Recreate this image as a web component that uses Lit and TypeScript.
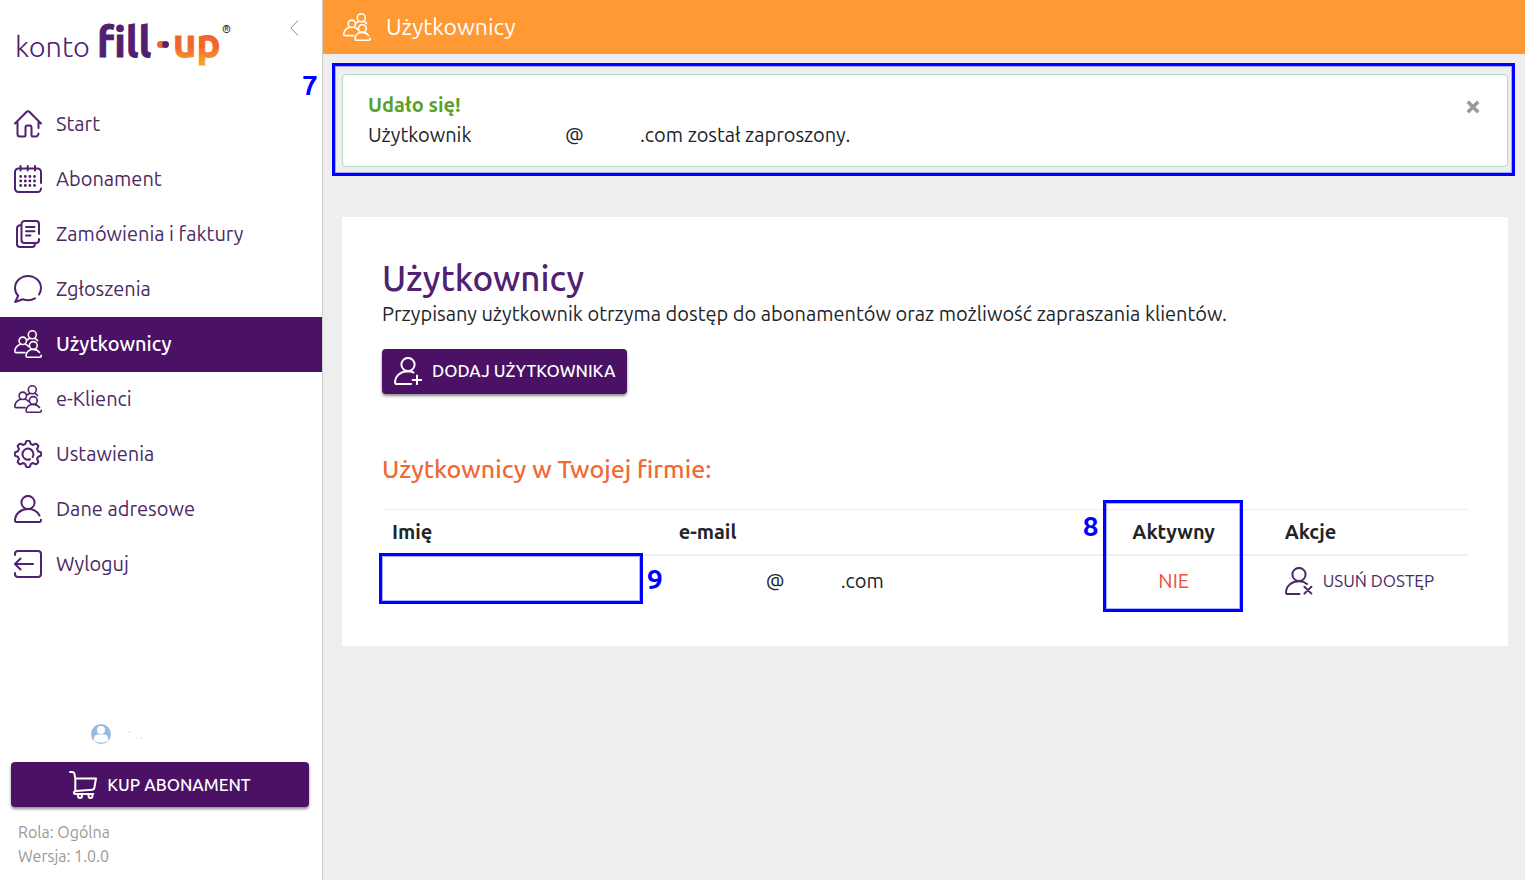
import { LitElement, html, css, svg } from "lit";
import { customElement, property, state } from "lit/decorators.js";
import { classMap } from "lit/directives/class-map.js";

/** Outline of a cog with rounded teeth, centred in a 28 unit box. */
function cog(teeth: number, inner: number, outer: number): string {
  const points: string[] = [];
  const steps = teeth * 12;
  for (let i = 0; i < steps; i++) {
    const angle = (i / steps) * Math.PI * 2;
    const wave = Math.tanh(2.6 * Math.cos(teeth * angle));
    const radius = (inner + outer) / 2 + (wave * (outer - inner)) / 2;
    points.push(
      `${(14 + radius * Math.sin(angle)).toFixed(2)} ${(14 - radius * Math.cos(angle)).toFixed(2)}`
    );
  }
  return `M${points.join("L")}Z`;
}

const ICONS: Record<string, unknown> = {
  home: svg`<path d="M1 13.500 12.700 1.800a1.800 1.800 0 0 1 2.600 0L27 13.500M3.500 12v12a2.500 2.500 0 0 0 2.500 2.500h4.500c.6 0 1-.4 1-1V17.500a2 2 0 0 1 2-2h2a2 2 0 0 1 2 2v8c0 .6.4 1 1 1H21.500a3 3 0 0 0 3-3M24.500 12v6"/>`,
  calendar: svg`<path d="M27 18V7a3.500 3.500 0 0 0-3.500-3.500h-19A3.500 3.500 0 0 0 1 7v16.500A3.500 3.500 0 0 0 4.500 27h19a3.500 3.500 0 0 0 3.500-3.500M6.500 1v4.500M13.700 1v4.500M21 1v4.500"/>
    <path stroke-width="2.900" d="M6.700 11.500h0M11.300 11.500h0M15.900 11.500h0M20.500 11.500h0M6.700 16h0M11.300 16h0M15.900 16h0M20.500 16h0M6.700 20.500h0M11.300 20.500h0M15.900 20.500h0M20.500 20.500h0"/>`,
  documents: svg`<path d="M25 14V4a3 3 0 0 0-3-3H10.500a3 3 0 0 0-3 3v16a3 3 0 0 0 3 3H22a3 3 0 0 0 3-3v-1M7.500 5C4.500 5 3 6.500 3 8.500V24a3 3 0 0 0 3 3h12c2 0 3-1.500 3-3.500M12 7h8.500M12 11.300h8.500M12 15.600h4.500"/>`,
  chat: svg`<path d="M25 19.500A12.300 12.300 0 0 0 27 13C27 6.400 21.200 1 14 1S1 6.400 1 13c0 3.200 1.100 5.700 3.200 7.800L1.200 27l7.600-2.800c4 1.400 8.700 1.100 12.200-.9"/>`,
  users: svg`<g stroke-width="1.600"><circle cx="18.300" cy="4.800" r="4"/><path d="M21 8.500c1.200.6 2 1.300 2.600 2.200M15.500 8.500l-2.200 1.200"/>
    <circle cx="8.800" cy="10.800" r="3.700"/><path d="M6.500 14.200C3 15.500 1 18 .8 21.200c0 .9.500 1.400 1.400 1.400H11M11.500 14.200c1.300.5 2.200 1.300 3 2.300"/>
    <circle cx="19.300" cy="15.500" r="3.900"/><path d="M25.500 22.500c-1.400-1.900-3.400-3.100-6.200-3.100-4.200 0-7 2.600-7.300 6.300 0 1 .5 1.500 1.400 1.500h12.400c1 0 1.500-.6 1.400-1.900"/></g>`,
  gear: svg`<path d="${cog(8, 10.3, 13.2)}"/><path d="M18.600 17A5.500 5.500 0 1 0 16 19.200"/>`,
  user: svg`<circle cx="14" cy="7.500" r="6.600"/><path d="M25.500 20.500c-2.200-4-6.300-6.400-11.500-6.400C6.800 14.100 1.500 18.500 1 25c-.1 1.300.6 2 1.800 2h22.400c1.200 0 1.900-.7 1.800-2.300"/>`,
  logout: svg`<path d="M1 5V4a3 3 0 0 1 3-3h20a3 3 0 0 1 3 3v20a3 3 0 0 1-3 3H4a3 3 0 0 1-3-3v-1M19 14H1.500M6.500 8.500 1 14l5.500 5.500"/>`,
  userPlus: svg`<circle cx="14" cy="7.500" r="6.600"/><path d="M19.500 15.500a15 15 0 0 0-5.500-1.200C6.800 14.300 1.500 18.500 1 25c-.1 1.300.6 2 1.800 2H17M23 18.500v8.800M18.600 22.900h8.800"/>`,
  userRemove: svg`<circle cx="14" cy="7.500" r="6.600"/><path d="M22 17c-2.200-1.800-4.900-2.700-8-2.700C6.800 14.300 1.500 18.500 1 25c-.1 1.300.6 2 1.800 2H14.500M19.400 19.800l7 6.800M26.400 19.800l-7 6.800"/>`,
  cart: svg`<path d="M1 1h2c1.400 0 2.200.7 2.500 2l.8 4.500H27L25.300 17c-.2 1-.9 1.600-1.900 1.700L6.800 20c-2.600.4-2.400 3 0 3h17.500M6.300 7.500V19.500"/><circle cx="11" cy="25" r="2"/><circle cx="21.500" cy="25" r="2"/>`,
};

@customElement("app-icon")
export class AppIcon extends LitElement {
  static styles = css`
    :host {
      display: block;
      flex: none;
      width: 28px;
      height: 28px;
    }
    .glyph {
      display: block;
      width: 100%;
      height: 100%;
      fill: none;
      stroke: currentColor;
      stroke-width: 2;
      stroke-linecap: round;
      stroke-linejoin: round;
    }
  `;

  @property() name = "home";

  render() {
    return html`<svg class="glyph" viewBox="0 0 28 28" aria-hidden="true">${ICONS[this.name]}</svg>`;
  }
}

interface NavItem {
  id: string;
  icon: string;
  label: string;
}

const NAV: NavItem[] = [
  { id: "start", icon: "home", label: "Start" },
  { id: "abonament", icon: "calendar", label: "Abonament" },
  { id: "faktury", icon: "documents", label: "Zamówienia i faktury" },
  { id: "zgloszenia", icon: "chat", label: "Zgłoszenia" },
  { id: "uzytkownicy", icon: "users", label: "Użytkownicy" },
  { id: "e-klienci", icon: "users", label: "e-Klienci" },
  { id: "ustawienia", icon: "gear", label: "Ustawienia" },
  { id: "dane", icon: "user", label: "Dane adresowe" },
  { id: "wyloguj", icon: "logout", label: "Wyloguj" },
];

@customElement("app-root")
export class AppRoot extends LitElement {
  static styles = css`
    :host {
      display: flex;
      min-height: 100vh;
      background: #eeeeee;
      color: #212529;
      font-family: Ubuntu, "Noto Sans", "Open Sans", sans-serif;
      font-size: 20px;
      line-height: 30px;
    }
    * {
      box-sizing: border-box;
    }
    button {
      font: inherit;
      cursor: pointer;
    }

    .sidebar {
      display: flex;
      flex: none;
      flex-direction: column;
      width: 323px;
      border-right: 1px solid #cccccc;
      background: #ffffff;
    }
    .brand {
      display: flex;
      justify-content: space-between;
      align-items: flex-start;
      height: 97px;
      padding: 16px 20px 0 14px;
    }
    .logo {
      display: block;
      width: 220px;
      height: 56px;
    }
    .logo-light {
      font-size: 29px;
      font-weight: 300;
      fill: #4f2170;
    }
    .logo-bold {
      font-size: 42px;
      font-weight: 700;
      fill: #4f2170;
      stroke: #4f2170;
      stroke-width: 1;
    }
    .logo-up {
      font-size: 40px;
      font-weight: 700;
      fill: url(#warm);
      stroke: url(#warm);
      stroke-width: 1;
    }
    .logo-mark {
      font-size: 11px;
      font-weight: 500;
      fill: #333333;
    }
    .collapse {
      width: 16px;
      height: 24px;
      padding: 2px 3px;
      border: 0;
      background: none;
      color: #888888;
    }
    .chevron {
      display: block;
      width: 11px;
      height: 18px;
      fill: none;
      stroke: currentColor;
    }
    .nav-link {
      display: flex;
      align-items: center;
      gap: 14px;
      height: 55px;
      padding: 0 14px 1px;
      color: #4b2a63;
      text-decoration: none;
    }
    .nav-link.active {
      background: #4a1164;
      color: #ffffff;
      font-weight: 500;
    }
    .nav-icon {
      color: #4f2170;
    }
    .active .nav-icon {
      color: #ffffff;
    }
    .side-foot {
      margin-top: auto;
      padding: 0 13px 12px 11px;
    }
    .account {
      display: flex;
      align-items: center;
      gap: 17px;
      padding: 0 80px 18px;
    }
    .avatar {
      display: block;
      width: 20px;
      height: 20px;
    }
    .specks {
      display: block;
      width: 16px;
      height: 10px;
    }
    .meta {
      padding: 13px 7px 0;
      color: #999999;
      font-size: 16px;
      line-height: 24px;
    }

    .solid {
      display: flex;
      align-items: center;
      justify-content: center;
      gap: 10px;
      height: 45px;
      padding: 0 12px 1px;
      border: 0;
      border-radius: 4px;
      background: #4a1164;
      box-shadow: 0 2px 3px rgba(0, 0, 0, 0.45);
      color: #ffffff;
      font-size: 17px;
      font-weight: 500;
      white-space: nowrap;
    }
    .wide {
      width: 100%;
      padding-bottom: 0;
    }

    .main {
      flex: 1;
      min-width: 0;
    }
    .topbar {
      display: flex;
      align-items: center;
      gap: 15px;
      height: 54px;
      padding: 0 20px;
      background: #ff9933;
      color: #ffffff;
      font-size: 23px;
    }
    .content {
      padding: 20px 17px 20px 19px;
    }

    .alert {
      position: relative;
      display: flex;
      justify-content: space-between;
      align-items: flex-start;
      margin-bottom: 50px;
      padding: 15px 25px 16px;
      border: 1px solid #b1dbbb;
      border-radius: 4px;
      background: #ffffff;
    }
    .alert-title {
      color: #5aa02c;
      font-weight: 700;
    }
    .alert-text {
      display: flex;
    }
    .invitee {
      width: 197px;
    }
    .at {
      width: 75px;
    }
    .close {
      width: 18px;
      height: 20px;
      margin-top: 7px;
      padding: 3px 2px;
      border: 0;
      background: none;
      color: #999999;
    }
    .cross {
      display: block;
      width: 14px;
      height: 14px;
      fill: none;
      stroke: currentColor;
      stroke-width: 3;
    }

    .card {
      padding: 40px;
      background: #ffffff;
    }
    .title {
      margin: 0;
      color: #4f2170;
      font-size: 35px;
      font-weight: 550;
      line-height: 42px;
    }
    .lead {
      margin: 0 0 20px;
    }
    .subtitle {
      margin: 60px 0 25px;
      color: #f06a35;
      font-size: 25px;
      font-weight: 550;
      line-height: 30px;
    }
    .people {
      width: 100%;
      border-collapse: separate;
      border-spacing: 0;
      table-layout: fixed;
    }
    .people th,
    .people td {
      position: relative;
      padding: 0 10px;
      text-align: left;
    }
    .people th {
      height: 47px;
      border-top: 1px solid #eeeeee;
      border-bottom: 2px solid #eeeeee;
      font-weight: 700;
    }
    .people td {
      height: 50px;
    }
    .col-name {
      width: 26.4%;
    }
    .col-mail {
      width: 37.2%;
    }
    .col-active {
      width: 18.6%;
    }
    .people .centered {
      text-align: center;
    }
    .people .no {
      color: #f0503c;
    }
    .mail {
      display: flex;
      padding-left: 87px;
    }
    .revoke {
      display: flex;
      align-items: center;
      gap: 10px;
      padding: 0;
      border: 0;
      background: none;
      color: #4b2a63;
      font-size: 17px;
      white-space: nowrap;
    }

    .frame {
      position: absolute;
      border: 3px solid #0000ff;
      box-shadow: inset 0 0 0 1px rgba(0, 0, 255, 0.3);
      pointer-events: none;
    }
    .number {
      position: absolute;
      color: #0000ff;
      font-size: 28px;
      font-weight: 700;
      line-height: 30px;
    }
    .frame-alert {
      inset: -12px -8px -10px -11px;
    }
    .number-alert {
      top: -5px;
      left: -41px;
    }
    .frame-active {
      top: -10px;
      right: 32px;
      left: 30px;
      height: 112px;
    }
    .number-active {
      top: 1px;
      left: 10px;
    }
    .frame-name {
      inset: -3px 26px 2px -3px;
    }
    .number-name {
      top: 8px;
      right: 6px;
    }
  `;

  @state() private current = "uzytkownicy";
  @state() private alertOpen = true;

  private select(event: Event, id: string) {
    event.preventDefault();
    this.current = id;
  }

  private renderLogo() {
    return html`
      <svg class="logo" viewBox="14 16 220 56" role="img" aria-label="konto fill-up">
        <defs>
          <linearGradient id="warm" x1="0" y1="0" x2="0" y2="1">
            <stop offset="0.600" stop-color="#f1662f" />
            <stop offset="0.950" stop-color="#fba030" />
          </linearGradient>
        </defs>
        <text class="logo-light" x="15" y="57">konto</text>
        <text class="logo-bold" x="97" y="57">fill</text>
        <rect x="157" y="41" width="12" height="7" rx="3.500" fill="#f1662f" />
        <circle cx="165.500" cy="44.500" r="3.300" fill="#4f2170" />
        <text class="logo-up" x="173" y="57">up</text>
        <text class="logo-mark" x="222" y="33">®</text>
      </svg>
    `;
  }

  private renderSidebar() {
    return html`
      <aside class="sidebar">
        <div class="brand">
          ${this.renderLogo()}
          <button class="collapse" aria-label="Zwiń menu">
            <svg class="chevron" viewBox="0 0 11 18"><path d="M9 1.500 2 9l7 7.500" /></svg>
          </button>
        </div>
        <nav>
          ${NAV.map(
            (item) => html`
              <a
                href="#${item.id}"
                class=${classMap({ "nav-link": true, active: item.id === this.current })}
                @click=${(e: Event) => this.select(e, item.id)}
              >
                <app-icon class="nav-icon" name=${item.icon}></app-icon>
                <span>${item.label}</span>
              </a>
            `
          )}
        </nav>
        <div class="side-foot">
          <div class="account">
            <svg class="avatar" viewBox="0 0 20 20" aria-hidden="true">
              <circle cx="10" cy="10" r="10" fill="#96bbdf" />
              <circle cx="10" cy="6" r="4" fill="#ffffff" />
              <path d="M3 17v-3C3 11.500 5 10.500 7 10.500h6c2 0 4 1 4 3.500v3Q10 20.500 3 17Z" fill="#ffffff" />
            </svg>
            <svg class="specks" viewBox="0 0 16 10" aria-hidden="true">
              <path d="M1 3h1" stroke="#aaaaaa" />
              <path d="M8 9.500h1M13 8.500h1" stroke="#e6d6c0" />
            </svg>
          </div>
          <button class="solid wide"><app-icon name="cart"></app-icon>KUP ABONAMENT</button>
          <div class="meta">
            <div>Rola: Ogólna</div>
            <div>Wersja: 1.0.0</div>
          </div>
        </div>
      </aside>
    `;
  }

  private renderAlert() {
    return html`
      <section class="alert" role="alert">
        <div>
          <div class="alert-title">Udało się!</div>
          <div class="alert-text">
            <span class="invitee">Użytkownik</span>
            <span class="at">@</span>
            <span>.com został zaproszony.</span>
          </div>
        </div>
        <button class="close" aria-label="Zamknij" @click=${() => (this.alertOpen = false)}>
          <svg class="cross" viewBox="0 0 12 12"><path d="M1.500 1.500l9 9M10.500 1.500l-9 9" /></svg>
        </button>
        <span class="frame frame-alert"></span>
        <span class="number number-alert">7</span>
      </section>
    `;
  }

  render() {
    return html`
      ${this.renderSidebar()}
      <main class="main">
        <header class="topbar">
          <app-icon name="users"></app-icon>
          <span>Użytkownicy</span>
        </header>
        <div class="content">
          ${this.alertOpen ? this.renderAlert() : null}
          <section class="card">
            <h1 class="title">Użytkownicy</h1>
            <p class="lead">
              Przypisany użytkownik otrzyma dostęp do abonamentów oraz możliwość zapraszania klientów.
            </p>
            <button class="solid"><app-icon name="userPlus"></app-icon>DODAJ UŻYTKOWNIKA</button>
            <h2 class="subtitle">Użytkownicy w Twojej firmie:</h2>
            <table class="people">
              <thead>
                <tr>
                  <th class="col-name" scope="col">Imię</th>
                  <th class="col-mail" scope="col">e-mail</th>
                  <th class="col-active centered" scope="col">
                    Aktywny
                    <span class="frame frame-active"></span>
                    <span class="number number-active">8</span>
                  </th>
                  <th scope="col">Akcje</th>
                </tr>
              </thead>
              <tbody>
                <tr>
                  <td>
                    <span class="frame frame-name"></span>
                    <span class="number number-name">9</span>
                  </td>
                  <td>
                    <div class="mail"><span class="at">@</span><span>.com</span></div>
                  </td>
                  <td class="centered no">NIE</td>
                  <td>
                    <button class="revoke"><app-icon name="userRemove"></app-icon>USUŃ DOSTĘP</button>
                  </td>
                </tr>
              </tbody>
            </table>
          </section>
        </div>
      </main>
    `;
  }
}
